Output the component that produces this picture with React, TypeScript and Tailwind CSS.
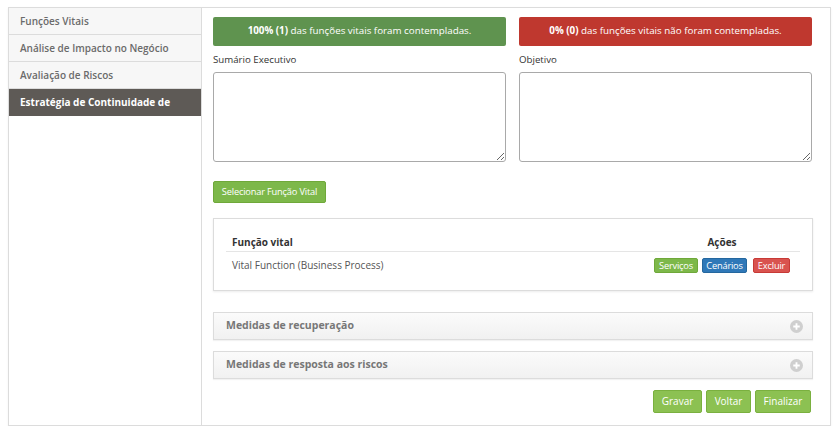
import React from "react";

const menu = [
  "Funções Vitais",
  "Análise de Impacto no Negócio",
  "Avaliação de Riscos",
  "Estratégia de Continuidade de Negócio",
];

function PlusIcon() {
  return (
    <svg width="13" height="13" viewBox="0 0 14 14">
      <circle cx="7" cy="7" r="7" fill="#cfcfcf" />
      <path d="M7 3.5v7M3.5 7h7" stroke="#fff" strokeWidth="2" />
    </svg>
  );
}

function Accordion({ title }: { title: string }) {
  return (
    <div className="flex h-[28px] w-[600px] items-center justify-between border border-[#dcdcdc] bg-gradient-to-b from-[#fbfbfb] to-[#f1f1f1] pl-[12px] pr-[9px] shadow-[0_1px_1px_rgba(0,0,0,0.05)]">
      <span className="text-[10.5px] font-bold text-[#777]">{title}</span>
      <PlusIcon />
    </div>
  );
}

export default function App() {
  return (
    <div className="pl-[8px] pt-[7px] font-['Open_Sans',sans-serif] text-[#333]">
      <div className="flex h-[419px] w-[823px] border border-[#dcdcdc] bg-white shadow-[0_1px_2px_rgba(0,0,0,0.06)]">
        {/* Sidebar */}
        <div className="w-[193px] shrink-0 border-r border-[#dcdcdc]">
          {menu.map((item, i) => (
            <div
              key={item}
              className={
                i === 3
                  ? "flex h-[27px] items-center overflow-hidden whitespace-nowrap bg-[#5e5a56] pl-[11px] text-[10px] font-bold text-white"
                  : "flex h-[27px] items-center overflow-hidden whitespace-nowrap border-b border-[#dcdcdc] bg-[#f7f7f7] pl-[11px] text-[10px] font-semibold text-[#6b6b6b]"
              }
            >
              {i === 3 ? "Estratégia de Continuidade de" : item}
            </div>
          ))}
        </div>

        {/* Main */}
        <div className="w-[628px] shrink-0 pl-[11px] pt-[9px]">
          <div className="grid w-[599px] grid-cols-2 gap-x-[13px]">
            <div className="flex h-[29px] items-center justify-center rounded-[2px] bg-[#5f934f] text-[9.8px] text-white">
              <b>100% (1)</b>&nbsp;das funções vitais foram contempladas.
            </div>
            <div className="flex h-[29px] items-center justify-center rounded-[2px] bg-[#bf382f] text-[9.8px] text-white">
              <b>0% (0)</b>&nbsp;das funções vitais não foram contempladas.
            </div>
            <div>
              <div className="mt-[7px] mb-[5px] text-[9.7px] leading-[14px] text-[#333]">Sumário Executivo</div>
              <textarea className="block h-[90px] w-full resize-y rounded-[3px] border border-[#a9a9a9] bg-white" />
            </div>
            <div>
              <div className="mt-[7px] mb-[5px] text-[9.7px] leading-[14px] text-[#333]">Objetivo</div>
              <textarea className="block h-[90px] w-full resize-y rounded-[3px] border border-[#a9a9a9] bg-white" />
            </div>
          </div>

          <button className="mt-[19px] flex h-[22px] w-[113px] items-center justify-center rounded-[2px] border border-[#6fa83a] bg-[#7db84a] text-[9.3px] tracking-[-0.2px] text-white">
            Selecionar Função Vital
          </button>

          {/* Table panel */}
          <div className="mt-[15px] w-[600px] border border-[#dcdcdc] bg-white px-[12px] pt-[14px] pb-[12px] shadow-[0_1px_2px_rgba(0,0,0,0.08)]">
            <div className="flex h-[19px] items-center border-b border-[#e5e5e5] text-[10px] font-bold text-[#333]">
              <div className="flex-1 pl-[6px]">Função vital</div>
              <div className="w-[146px] pr-[10px] text-center">Ações</div>
            </div>
            <div className="flex h-[26px] items-center text-[10px] text-[#555]">
              <div className="flex-1 pl-[6px]">Vital Function (Business Process)</div>
              <div className="flex gap-[4px] pr-[10px]">
                <span className="w-[44px] rounded-[2px] border border-[#6fa83a] bg-[#7db84a] text-center text-[9.3px] leading-[13px] tracking-[-0.2px] text-white">Serviços</span>
                <span className="w-[45px] rounded-[2px] border border-[#25679e] bg-[#2f78b8] text-center text-[9.3px] leading-[13px] tracking-[-0.2px] text-white">Cenários</span>
                <span className="ml-[2px] w-[37px] rounded-[2px] border border-[#c73a36] bg-[#d9534f] text-center text-[9.3px] leading-[13px] tracking-[-0.2px] text-white">Excluir</span>
              </div>
            </div>
          </div>

          <div className="mt-[21px] flex flex-col gap-[11px]">
            <Accordion title="Medidas de recuperação" />
            <Accordion title="Medidas de resposta aos riscos" />
          </div>

          <div className="mt-[11px] flex w-[598px] justify-end gap-[4px]">
            <button className="h-[23px] w-[49px] rounded-[2px] border border-[#7ab03f] bg-[#8cc152] text-[10px] text-white">Gravar</button>
            <button className="h-[23px] w-[45px] rounded-[2px] border border-[#7ab03f] bg-[#8cc152] text-[10px] text-white">Voltar</button>
            <button className="h-[23px] w-[56px] rounded-[2px] border border-[#7ab03f] bg-[#8cc152] text-[10px] text-white">Finalizar</button>
          </div>
        </div>
      </div>
    </div>
  );
}
